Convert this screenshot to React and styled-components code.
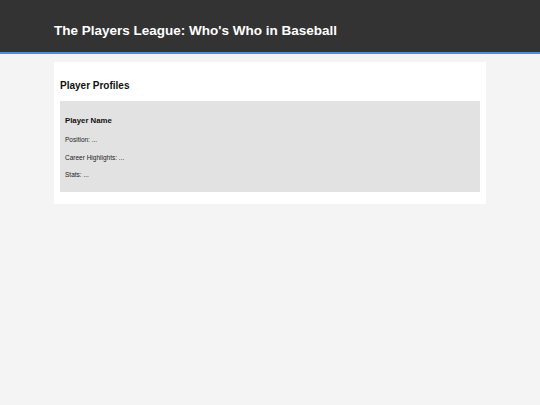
import React from 'react';
import styled, { createGlobalStyle } from 'styled-components';

const GlobalStyle = createGlobalStyle`
  body {
    margin: 0;
    background: #f4f4f4;
    font-family: "Liberation Sans", Arial, sans-serif;
    color: #222;
  }
`;

const Header = styled.header`
  background: #333;
  border-bottom: 2px solid #4a90e2;
  padding: 23px 0 13px;
`;

const HeaderInner = styled.div`
  width: 432px;
  margin: 0 auto;
`;

const Title = styled.h1`
  margin: 0;
  font-size: 13.5px;
  line-height: 16px;
  font-weight: bold;
  color: #fff;
`;

const Main = styled.main`
  width: 432px;
  margin: 8px auto;
  padding: 6px;
  box-sizing: border-box;
  background: #fff;
`;

const SectionTitle = styled.h2`
  margin: 11px 0 9px;
  font-size: 10px;
  line-height: 13px;
  font-weight: bold;
  color: #111;
`;

const ProfileCard = styled.div`
  background: #e2e2e2;
  padding: 6px 5px;
  margin-bottom: 6px;
`;

const PlayerName = styled.h3`
  margin: 9px 0 11px;
  font-size: 7.8px;
  line-height: 9px;
  font-weight: bold;
  color: #111;
`;

const Detail = styled.p`
  margin: 0 0 9.5px;
  font-size: 6.5px;
  line-height: 8px;
  color: #222;

  &:last-child {
    margin-bottom: 7px;
  }
`;

function App() {
  return (
    <>
      <GlobalStyle />
      <Header>
        <HeaderInner>
          <Title>The Players League: Who's Who in Baseball</Title>
        </HeaderInner>
      </Header>
      <Main>
        <SectionTitle>Player Profiles</SectionTitle>
        <ProfileCard>
          <PlayerName>Player Name</PlayerName>
          <Detail>Position: ...</Detail>
          <Detail>Career Highlights: ...</Detail>
          <Detail>Stats: ...</Detail>
        </ProfileCard>
      </Main>
    </>
  );
}

export default App;
